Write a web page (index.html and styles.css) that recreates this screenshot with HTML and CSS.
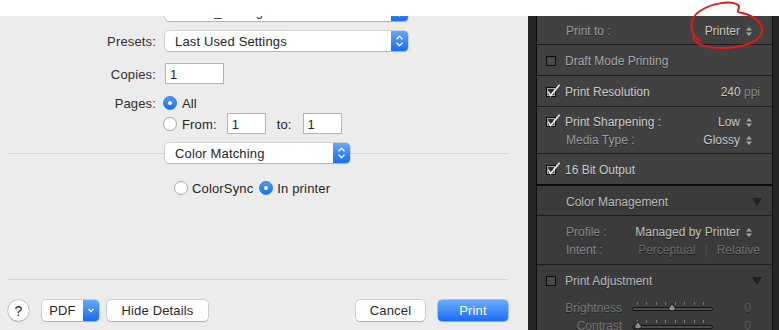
FILE: index.html
```html
<!DOCTYPE html>
<html lang="en">
<head>
  <meta charset="UTF-8">
  <meta name="viewport" content="width=device-width, initial-scale=1.0">
  <title>Print</title>
  <link rel="stylesheet" href="styles.css">
</head>
<body>
  <div class="topbar"></div>

  <div class="screen">
    <!-- macOS print sheet -->
    <section class="dialog">
      <div class="row row-first">
        <span class="label"></span>
        <div class="popup popup-wide">
          <span class="popup-text">Printer_Settings</span>
          <span class="popup-arrows"><svg width="17" height="20" viewBox="0 0 17 20"><path d="M5.5 8.2 8.5 5.2 11.5 8.2M5.5 11.8 8.5 14.8 11.5 11.8"/></svg></span>
        </div>
      </div>

      <div class="row row-presets">
        <span class="label">Presets:</span>
        <div class="popup popup-wide">
          <span class="popup-text">Last Used Settings</span>
          <span class="popup-arrows"><svg width="17" height="20" viewBox="0 0 17 20"><path d="M5.5 8.2 8.5 5.2 11.5 8.2M5.5 11.8 8.5 14.8 11.5 11.8"/></svg></span>
        </div>
      </div>

      <div class="row row-copies">
        <span class="label">Copies:</span>
        <span class="field field-copies">1</span>
      </div>

      <div class="row row-pages">
        <span class="label">Pages:</span>
        <span class="radio on"></span>
        <span class="radio-text">All</span>
      </div>

      <div class="row row-from">
        <span class="label"></span>
        <span class="radio"></span>
        <span class="radio-text">From:</span>
        <span class="field field-range">1</span>
        <span class="range-to">to:</span>
        <span class="field field-range">1</span>
      </div>

      <div class="divider-row">
        <div class="popup popup-panel">
          <span class="popup-text">Color Matching</span>
          <span class="popup-arrows"><svg width="17" height="20" viewBox="0 0 17 20"><path d="M5.5 8.2 8.5 5.2 11.5 8.2M5.5 11.8 8.5 14.8 11.5 11.8"/></svg></span>
        </div>
      </div>

      <div class="row color-options">
        <span class="radio"></span>
        <span class="radio-text">ColorSync</span>
        <span class="radio on radio-gap"></span>
        <span class="radio-text">In printer</span>
      </div>

      <footer class="dialog-footer">
        <span class="btn btn-help">?</span>
        <span class="btn btn-pdf">
          <span class="pdf-text">PDF</span>
          <span class="pdf-arrow"><svg width="16" height="21" viewBox="0 0 16 21"><path d="M5.5 9 8 11.5 10.5 9"/></svg></span>
        </span>
        <span class="btn btn-details">Hide Details</span>
        <span class="btn btn-cancel">Cancel</span>
        <span class="btn btn-primary">Print</span>
      </footer>
    </section>

    <!-- Lightroom print job panel -->
    <aside class="lr">
      <div class="lr-panel">
        <div class="lr-row lr-printto">
          <span class="lr-label">Print to :</span>
          <span class="lr-value">Printer</span>
          <svg class="updown" width="6" height="9" viewBox="0 0 6 9"><path d="M0 3.6 3 0 6 3.6ZM0 5.4 3 9 6 5.4Z"/></svg>
        </div>

        <div class="lr-row">
          <span class="check"></span>
          <span class="lr-text dim">Draft Mode Printing</span>
        </div>

        <div class="lr-row">
          <span class="check on"><svg width="16" height="14" viewBox="0 0 16 14"><path d="M2.2 8.6 4.6 12.6 13.6 1.8"/></svg></span>
          <span class="lr-text">Print Resolution</span>
          <span class="lr-value res">240 <span class="unit">ppi</span></span>
        </div>

        <div class="lr-row lr-double">
          <div class="lr-line">
            <span class="check on"><svg width="16" height="14" viewBox="0 0 16 14"><path d="M2.2 8.6 4.6 12.6 13.6 1.8"/></svg></span>
            <span class="lr-text">Print Sharpening :</span>
            <span class="lr-value">Low</span>
            <svg class="updown" width="6" height="9" viewBox="0 0 6 9"><path d="M0 3.6 3 0 6 3.6ZM0 5.4 3 9 6 5.4Z"/></svg>
          </div>
          <div class="lr-line lr-indent">
            <span class="lr-label">Media Type :</span>
            <span class="lr-value">Glossy</span>
            <svg class="updown" width="6" height="9" viewBox="0 0 6 9"><path d="M0 3.6 3 0 6 3.6ZM0 5.4 3 9 6 5.4Z"/></svg>
          </div>
        </div>

        <div class="lr-row lr-section-end">
          <span class="check on"><svg width="16" height="14" viewBox="0 0 16 14"><path d="M2.2 8.6 4.6 12.6 13.6 1.8"/></svg></span>
          <span class="lr-text">16 Bit Output</span>
        </div>

        <div class="lower">
          <div class="lr-row lr-header">
            <span class="lr-text head">Color Management</span>
            <span class="disclosure"></span>
          </div>

          <div class="lr-row lr-double lr-profile">
            <div class="lr-line">
              <span class="lr-label">Profile :</span>
              <span class="lr-value">Managed by Printer</span>
              <svg class="updown" width="6" height="9" viewBox="0 0 6 9"><path d="M0 3.6 3 0 6 3.6ZM0 5.4 3 9 6 5.4Z"/></svg>
            </div>
            <div class="lr-line">
              <span class="lr-label faint">Intent :</span>
              <span class="intent">Perceptual</span>
              <span class="intent-sep">|</span>
              <span class="intent intent-last">Relative</span>
            </div>
          </div>

          <div class="lr-row lr-adjust">
            <span class="check"></span>
            <span class="lr-text head">Print Adjustment</span>
            <span class="disclosure"></span>
          </div>

          <div class="sliders">
            <div class="slider-row">
              <span class="slider-label">Brightness</span>
              <div class="slider">
                <span class="ticks"></span>
                <span class="track"></span>
                <svg class="thumb" style="left:35px" width="10" height="10" viewBox="0 0 10 10"><path d="M5 .5 8.6 5.6A3.8 3.4 0 0 1 1.4 5.6Z"/></svg>
              </div>
              <span class="slider-value">0</span>
            </div>
            <div class="slider-row">
              <span class="slider-label">Contrast</span>
              <div class="slider">
                <span class="ticks"></span>
                <span class="track"></span>
                <svg class="thumb" style="left:1px" width="10" height="10" viewBox="0 0 10 10"><path d="M5 .5 8.6 5.6A3.8 3.4 0 0 1 1.4 5.6Z"/></svg>
              </div>
              <span class="slider-value">0</span>
            </div>
          </div>
        </div>
      </div>
    </aside>
  </div>

  <!-- hand drawn red mark round the Print to value -->
  <svg class="annotation" width="779" height="330" viewBox="0 0 779 330">
    <path d="M700 41C688 33 689 18 700 11 712 3 731 0 738 5 742 9 733 12 742 13 752 15 763 22 762 31 761 41 745 48 722 48 705 48 695 44 693 37"/>
  </svg>
</body>
</html>
```

FILE: styles.css
```css
body {
  margin: 0;
  width: 779px;
  height: 330px;
  overflow: hidden;
  position: relative;
  font-family: 'Liberation Sans', Arial, Helvetica, sans-serif;
  background: #ececec;
}
.topbar {
  height: 16px;
  background: #fff;
  position: relative;
  z-index: 1;
}
.screen {
  display: flex;
  height: 314px;
}

/* print sheet */
.dialog {
  width: 528px;
  flex: none;
  display: flex;
  flex-direction: column;
  background: #ececec;
  color: #262626;
  font-size: 13px;
  letter-spacing: 0.15px;
}
.row {
  display: flex;
  align-items: center;
}
.label {
  width: 156px;
  flex: none;
  text-align: right;
  color: #2e2e2e;
  padding-top: 1px;
}
.row-first {
  margin-top: -15px;
}
.row-presets {
  margin-top: 10px;
}
.row-copies {
  margin-top: 12px;
}
.row-pages {
  margin-top: 12px;
  height: 14px;
}
.row-from {
  margin-top: 3px;
}
.popup {
  height: 20px;
  display: flex;
  background: #fff;
  border-radius: 4px;
  overflow: hidden;
  box-shadow: 0 0 0 0.5px rgba(0,0,0,0.22), 0 1px 1px rgba(0,0,0,0.16);
  margin-left: 9px;
}
.popup-wide {
  width: 243px;
}
.popup-panel {
  width: 185px;
  margin-left: 0;
}
.popup-text {
  flex: 1;
  padding-left: 10px;
  padding-top: 1px;
  line-height: 20px;
  white-space: nowrap;
}
.popup-arrows {
  width: 17px;
  background: linear-gradient(#63a8fe, #1a6af6);
}
.popup-arrows svg,
.pdf-arrow svg {
  display: block;
  fill: none;
  stroke: #fff;
  stroke-width: 1.3;
}
.field {
  height: 21px;
  box-sizing: border-box;
  border: 1px solid #b4b4b4;
  background: #fff;
  padding: 1px 0 0 4px;
  line-height: 19px;
}
.field-copies {
  width: 59px;
  margin-left: 9px;
}
.field-range {
  width: 39px;
  margin-left: 10px;
}
.range-to {
  margin-left: 11px;
  margin-right: 1px;
  padding-top: 1px;
}
.radio {
  width: 14px;
  height: 14px;
  box-sizing: border-box;
  flex: none;
  border-radius: 50%;
  border: 1px solid #a9a9a9;
  background: #fff;
  margin-left: 7px;
  position: relative;
}
.radio.on {
  border-color: #2c79f1;
  background: linear-gradient(#4e9bfd, #1e6ff5);
}
.radio.on::after {
  content: '';
  position: absolute;
  left: 4px;
  top: 4px;
  width: 4px;
  height: 4px;
  border-radius: 50%;
  background: #fff;
}
.radio-text {
  margin-left: 5px;
  padding-top: 1px;
}
.divider-row {
  margin: 9px 20px 0 8px;
  padding-left: 157px;
  background: linear-gradient(#d4d4d4, #d4d4d4) 0 10px / 100% 1px no-repeat;
}
.color-options {
  margin-top: 17px;
  height: 16px;
  padding-left: 167px;
}
.color-options .radio-text {
  margin-left: 4px;
}
.radio-gap {
  margin-left: 6px;
}
.dialog-footer {
  margin: auto 20px 0 8px;
  border-top: 1px solid #d4d4d4;
  padding: 20px 0 9px;
  display: flex;
  align-items: center;
}
.btn {
  height: 21px;
  box-sizing: border-box;
  display: flex;
  align-items: center;
  justify-content: center;
  background: #fff;
  border-radius: 4px;
  box-shadow: 0 0 0 0.5px rgba(0,0,0,0.25), 0 1px 1px rgba(0,0,0,0.15);
  color: #2a2a2a;
}
.btn-help {
  width: 21px;
  border-radius: 50%;
  font-size: 14px;
}
.btn-pdf {
  width: 57px;
  margin-left: 13px;
  justify-content: flex-start;
  overflow: hidden;
}
.pdf-text {
  width: 41px;
  text-align: center;
}
.pdf-arrow {
  width: 16px;
  height: 21px;
  background: linear-gradient(#63a8fe, #1a6af6);
}
.btn-details {
  width: 101px;
  margin-left: 8px;
}
.btn-cancel {
  width: 69px;
  margin-left: auto;
}
.btn-primary {
  width: 70px;
  margin-left: 13px;
  color: #fff;
  background: linear-gradient(#68adfe, #1b6cf6);
  box-shadow: 0 0 0 0.5px rgba(20,90,220,0.6), 0 1px 1px rgba(0,0,0,0.15);
}

/* lightroom panel */
.lr {
  flex: 1;
  display: flex;
  background: #262626;
  padding: 0 6px 0 8px;
}
.lr-panel {
  flex: 1;
  border-left: 1px solid #0e0e0e;
  border-right: 1px solid #0e0e0e;
  background: #414141;
  font-size: 12px;
  color: #cdcdcd;
  text-shadow: 0 1px 0 rgba(0,0,0,0.45);
}
.lr-row {
  box-sizing: border-box;
  height: 31px;
  display: flex;
  align-items: center;
  padding: 2px 10px 0 9px;
  border-bottom: 1px solid #1d1d1d;
}
.lr-printto {
  height: 29px;
  padding-left: 29px;
}
.lr-double {
  height: 47px;
  flex-direction: column;
  align-items: stretch;
  justify-content: flex-start;
  padding-top: 8px;
}
.lr-line {
  height: 14px;
  display: flex;
  align-items: center;
  margin-bottom: 4px;
}
.lr-indent {
  padding-left: 20px;
}
.lr-section-end {
  height: 32px;
  border-bottom: 2px solid #0c0c0c;
}
.lr-label {
  color: #9c9c9c;
}
.lr-label.faint {
  color: #6f6f6f;
}
.lr-text {
  margin-left: 9px;
}
.lr-text.dim {
  color: #a9a9a9;
}
.lr-text.head {
  color: #bdbdbd;
}
.lr-value {
  margin-left: auto;
  color: #c9c9c9;
}
.lr-value.res {
  margin-right: 2px;
}
.unit {
  color: #8b8b8b;
}
.updown {
  fill: #a7a7a7;
  margin: 0 10px 0 6px;
}
.check {
  width: 10px;
  height: 10px;
  box-sizing: border-box;
  flex: none;
  border: 1px solid #0b0b0b;
  background: #4a4a4a;
  position: relative;
}
.check.on {
  background: #2e2e2e;
  box-shadow: inset 0 0 0 1px #a8a8a8;
}
.check svg {
  position: absolute;
  left: -1px;
  top: -5px;
  fill: none;
  stroke: #f2f2f2;
  stroke-width: 1.5;
}
.lower {
  background: #3b3b3b;
}
.lr-header {
  height: 30px;
  padding-left: 29px;
}
.lr-header .lr-text {
  margin-left: 0;
}
.disclosure {
  margin: 0 0 0 auto;
  width: 0;
  height: 0;
  border-left: 5px solid transparent;
  border-right: 5px solid transparent;
  border-top: 8px solid #202020;
}
.lr-profile {
  height: 49px;
  padding-top: 9px;
  padding-left: 29px;
}
.lr-profile .lr-label {
  color: #8a8a8a;
}
.lr-profile .lr-value {
  color: #c0c0c0;
}
.intent {
  margin-left: auto;
  color: #6b6b6b;
  text-shadow: 0 1px 0 rgba(0,0,0,0.6);
}
.intent-sep {
  color: #5c5c5c;
  margin: 0 9px;
}
.intent-last {
  margin-left: 0;
  margin-right: 2px;
  color: #727272;
}
.lr-adjust {
  height: 30px;
  border-bottom: none;
}
.sliders {
  padding-top: 4px;
}
.slider-row {
  height: 18px;
  display: flex;
  align-items: center;
}
.slider-label {
  width: 85px;
  flex: none;
  text-align: right;
  color: #787878;
}
.slider {
  width: 81px;
  height: 18px;
  margin-left: 10px;
  position: relative;
}
.ticks {
  position: absolute;
  left: 5px;
  right: 4px;
  top: 3px;
  height: 3px;
  background: repeating-linear-gradient(90deg, #7a7a7a 0 1px, transparent 1px 9.5px);
}
.track {
  position: absolute;
  left: 0;
  right: 0;
  top: 8px;
  height: 2px;
  border: 1px solid #141414;
  border-radius: 3px;
  background: #4d4d4d;
}
.thumb {
  position: absolute;
  top: 4px;
  fill: #8e8e8e;
  stroke: #1a1a1a;
  stroke-width: 1;
}
.slider-value {
  margin: 0 21px 0 auto;
  color: #5f5f5f;
}

/* annotation */
.annotation {
  position: absolute;
  left: 0;
  top: 0;
  z-index: 2;
  pointer-events: none;
  fill: none;
  stroke: #e51919;
  stroke-width: 2;
  stroke-linecap: round;
}
```
